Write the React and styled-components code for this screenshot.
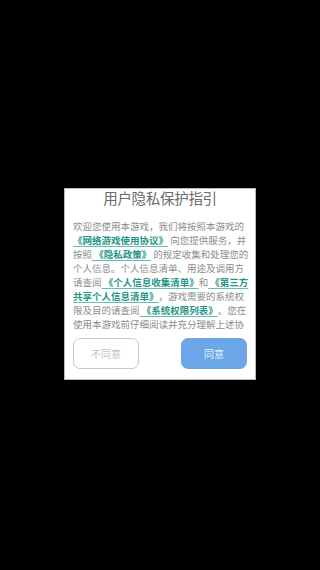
import React from 'react';
import styled, { createGlobalStyle } from 'styled-components';

const GlobalStyle = createGlobalStyle`
  html, body {
    margin: 0;
    padding: 0;
    background: #000;
  }
  body {
    font-family: "Noto Sans CJK SC", "Noto Sans", sans-serif;
  }
`;

const Screen = styled.div`
  width: 320px;
  height: 570px;
  background: #000;
  display: flex;
  align-items: center;
  justify-content: center;
`;

const Dialog = styled.div`
  box-sizing: border-box;
  width: 192px;
  height: 192px;
  margin-top: -2px;
  background: #fff;
  border: 1px solid #b8b8b8;
  display: flex;
  flex-direction: column;
`;

const Title = styled.h1`
  margin: 0;
  height: 30px;
  padding-top: 0;
  box-sizing: border-box;
  font-size: 14.5px;
  line-height: 18px;
  font-weight: 400;
  text-align: center;
  color: #6a6a6a;
  letter-spacing: -0.3px;
`;

const Body = styled.div`
  height: 112px;
  padding: 0 0 0 8px;
  overflow: hidden;
`;

const Text = styled.p`
  margin: 0;
  width: 177px;
  font-size: 9.5px;
  line-height: 14px;
  color: #8c8c8c;
  text-spacing-trim: space-all;
`;

const Link = styled.span`
  color: #1f9585;
  font-weight: 700;
  text-decoration: underline;
  text-decoration-color: #5fc0b3;
  text-underline-offset: 2px;
`;

const Actions = styled.div`
  display: flex;
  justify-content: space-between;
  padding: 0 8px;
  margin-top: 7px;
`;

const Button = styled.button`
  box-sizing: border-box;
  width: 66px;
  height: 31px;
  border-radius: 7px;
  font-family: inherit;
  font-size: 10px;
  cursor: pointer;
  border: 1px solid ${(p) => (p.primary ? '#6ba7e8' : '#c8c8c8')};
  background: ${(p) => (p.primary ? '#6ba7e8' : '#fff')};
  color: ${(p) => (p.primary ? '#e8f1fc' : '#c2c2c2')};
`;

const App = () => {
  return (
    <>
      <GlobalStyle />
      <Screen>
        <Dialog>
          <Title>用户隐私保护指引</Title>
          <Body>
            <Text>
              欢迎您使用本游戏，我们将按照本游戏的
              <Link> 《网络游戏使用协议》</Link> 向您提供服务，并按照
              <Link> 《隐私政策》</Link> 的规定收集和处理您的个人信息。个人信息清单、用途及调用方请查阅
              <Link> 《个人信息收集清单》</Link>和<Link> 《第三方共享个人信息清单》</Link>，游戏需要的系统权限及目的请查阅
              <Link> 《系统权限列表》</Link>。您在使用本游戏前仔细阅读并充分理解上述协议内容，如您同意，请点击“同意”开始接受我们的服务。
            </Text>
          </Body>
          <Actions>
            <Button>不同意</Button>
            <Button primary>同意</Button>
          </Actions>
        </Dialog>
      </Screen>
    </>
  );
};

export default App;
